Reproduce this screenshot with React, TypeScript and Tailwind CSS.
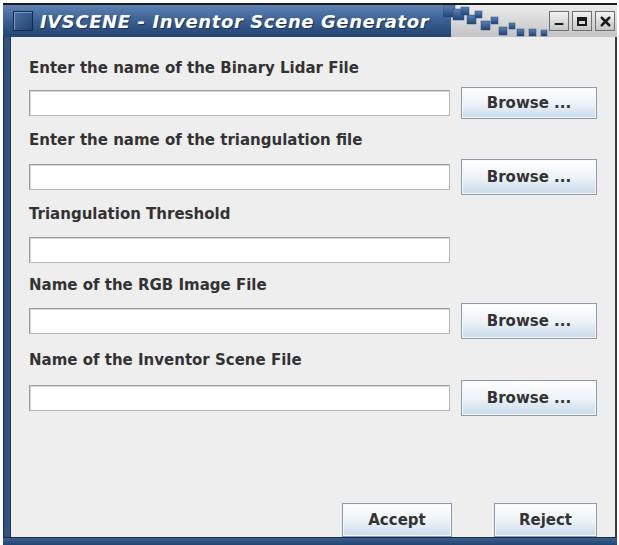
import { Minus, X } from "lucide-react";

const FONT = "font-['DejaVu_Sans',_'Liberation_Sans',_sans-serif]";

type Row = { label: string; browse: boolean; labelMt: string; rowMt: string; rowH: string };

const ROWS: Row[] = [
    { label: "Enter the name of the Binary Lidar File", browse: true, labelMt: "mt-[22px]", rowMt: "mt-[10px]", rowH: "h-[32px]" },
    { label: "Enter the name of the triangulation file", browse: true, labelMt: "mt-[12px]", rowMt: "mt-[10px]", rowH: "h-[36px]" },
    { label: "Triangulation Threshold", browse: false, labelMt: "mt-[10px]", rowMt: "mt-[13px]", rowH: "h-[27px]" },
    { label: "Name of the RGB Image File", browse: true, labelMt: "mt-[13px]", rowMt: "mt-[9px]", rowH: "h-[36px]" },
    { label: "Name of the Inventor Scene File", browse: true, labelMt: "mt-[12px]", rowMt: "mt-[11px]", rowH: "h-[36px]" },
];

function SwingButton({ label, width }: { label: string; width: string }) {
    return (
        <button
            className={`${width} h-full shrink-0 border border-[#8e9aa8] bg-gradient-to-b from-[#ffffff] via-[#eef3f8] to-[#c9dbec] text-[15px] font-bold text-[#333333] shadow-[inset_0_0_0_1px_#f6f9fc]`}
        >
            {label}
        </button>
    );
}

function TextField() {
    return (
        <div className="h-[26px] w-[421px] border border-[#9c9c9c] border-b-[#b8b8b8] border-r-[#b8b8b8] bg-white shadow-[inset_1px_1px_0_#d8d8d8]" />
    );
}

function WinButton({ children }: { children: React.ReactNode }) {
    return (
        <div className="flex h-[20px] w-[20px] items-center justify-center border border-[#6f6f6f] bg-gradient-to-b from-[#f4f4f4] to-[#c6c6c6] text-[#1a1a1a]">
            {children}
        </div>
    );
}

// stepped blue squares where the title gradient breaks into grey
function TitleFade() {
    const blocks = [
        [0, 0, 12], [10, 4, 11], [18, 2, 8], [24, 10, 9], [32, 6, 7], [38, 16, 9],
        [48, 12, 7], [56, 22, 8], [66, 18, 6], [74, 24, 7], [86, 24, 7], [98, 25, 6],
    ];
    return (
        <svg width="110" height="34" viewBox="0 0 110 34" className="absolute left-[440px] top-0">
            <defs>
                <linearGradient id="sq" x1="0" y1="0" x2="0" y2="1">
                    <stop offset="0" stopColor="#5d82b4" />
                    <stop offset="1" stopColor="#1f4477" />
                </linearGradient>
            </defs>
            {blocks.map(([x, y, s], i) => (
                <rect key={i} x={x} y={y} width={s} height={s} fill="url(#sq)" stroke="#2c4d7c" strokeWidth="0.5" />
            ))}
        </svg>
    );
}

export default function App() {
    return (
        <div className={`${FONT} relative h-[545px] w-[619px] overflow-hidden bg-white`}>
            <div className="ml-[3px] mt-[3px] flex h-[542px] w-[614px] flex-col">
                {/* ── Title bar ── */}
                <div className="relative flex h-[34px] shrink-0 items-center border-t-2 border-[#1b1b22] bg-gradient-to-b from-[#ececec] to-[#c4c4c4]">
                    <div className="absolute inset-y-0 left-0 w-[448px] bg-gradient-to-b from-[#5f82b2] via-[#3a5f92] to-[#22446f]" />
                    <TitleFade />
                    <div className="relative ml-[10px] h-[20px] w-[20px] border border-[#16294a] bg-gradient-to-br from-[#4d70a3] to-[#23446f] shadow-[inset_1px_1px_0_#7c9cc8]" />
                    <span className="relative ml-[7px] text-[18px] font-bold italic tracking-[0.6px] text-white [text-shadow:1px_1px_0_#1b3358]">
                        IVSCENE - Inventor Scene Generator
                    </span>
                    <div className="relative ml-auto mr-[2px] flex gap-[3px]">
                        <WinButton>
                            <Minus size={12} strokeWidth={4} className="mt-[6px]" />
                        </WinButton>
                        <WinButton>
                            <div className="h-[9px] w-[10px] border-2 border-t-[4px] border-[#1a1a1a]" />
                        </WinButton>
                        <WinButton>
                            <X size={15} strokeWidth={4} />
                        </WinButton>
                    </div>
                </div>

                {/* ── Frame + content ── */}
                <div className="flex min-h-0 flex-1 border-l border-[#1b2a44] bg-[#2f5283]">
                    <div className="ml-[6px] flex min-h-0 flex-1 flex-col border-l border-r-2 border-[#30353d] border-r-[#3c3c3c] bg-[#eeeeee] pl-[18px]">
                        {ROWS.map((row) => (
                            <div key={row.label} className="flex flex-col">
                                <div className={`${row.labelMt} h-[18px] text-[15px] font-bold leading-[18px] text-[#333333]`}>
                                    {row.label}
                                </div>
                                <div className={`${row.rowMt} ${row.rowH} flex items-center gap-[11px]`}>
                                    <TextField />
                                    {row.browse && <SwingButton label="Browse ..." width="w-[136px]" />}
                                </div>
                            </div>
                        ))}
                        <div className="mt-auto flex h-[34px] items-end">
                            <div className="ml-[313px] h-full">
                                <SwingButton label="Accept" width="w-[110px]" />
                            </div>
                            <div className="ml-[42px] h-full">
                                <SwingButton label="Reject" width="w-[103px]" />
                            </div>
                        </div>
                    </div>
                </div>
                <div className="h-[8px] shrink-0 border-t border-[#1c2a40] bg-gradient-to-b from-[#3b5f91] to-[#22446f]" />
            </div>
        </div>
    );
}
